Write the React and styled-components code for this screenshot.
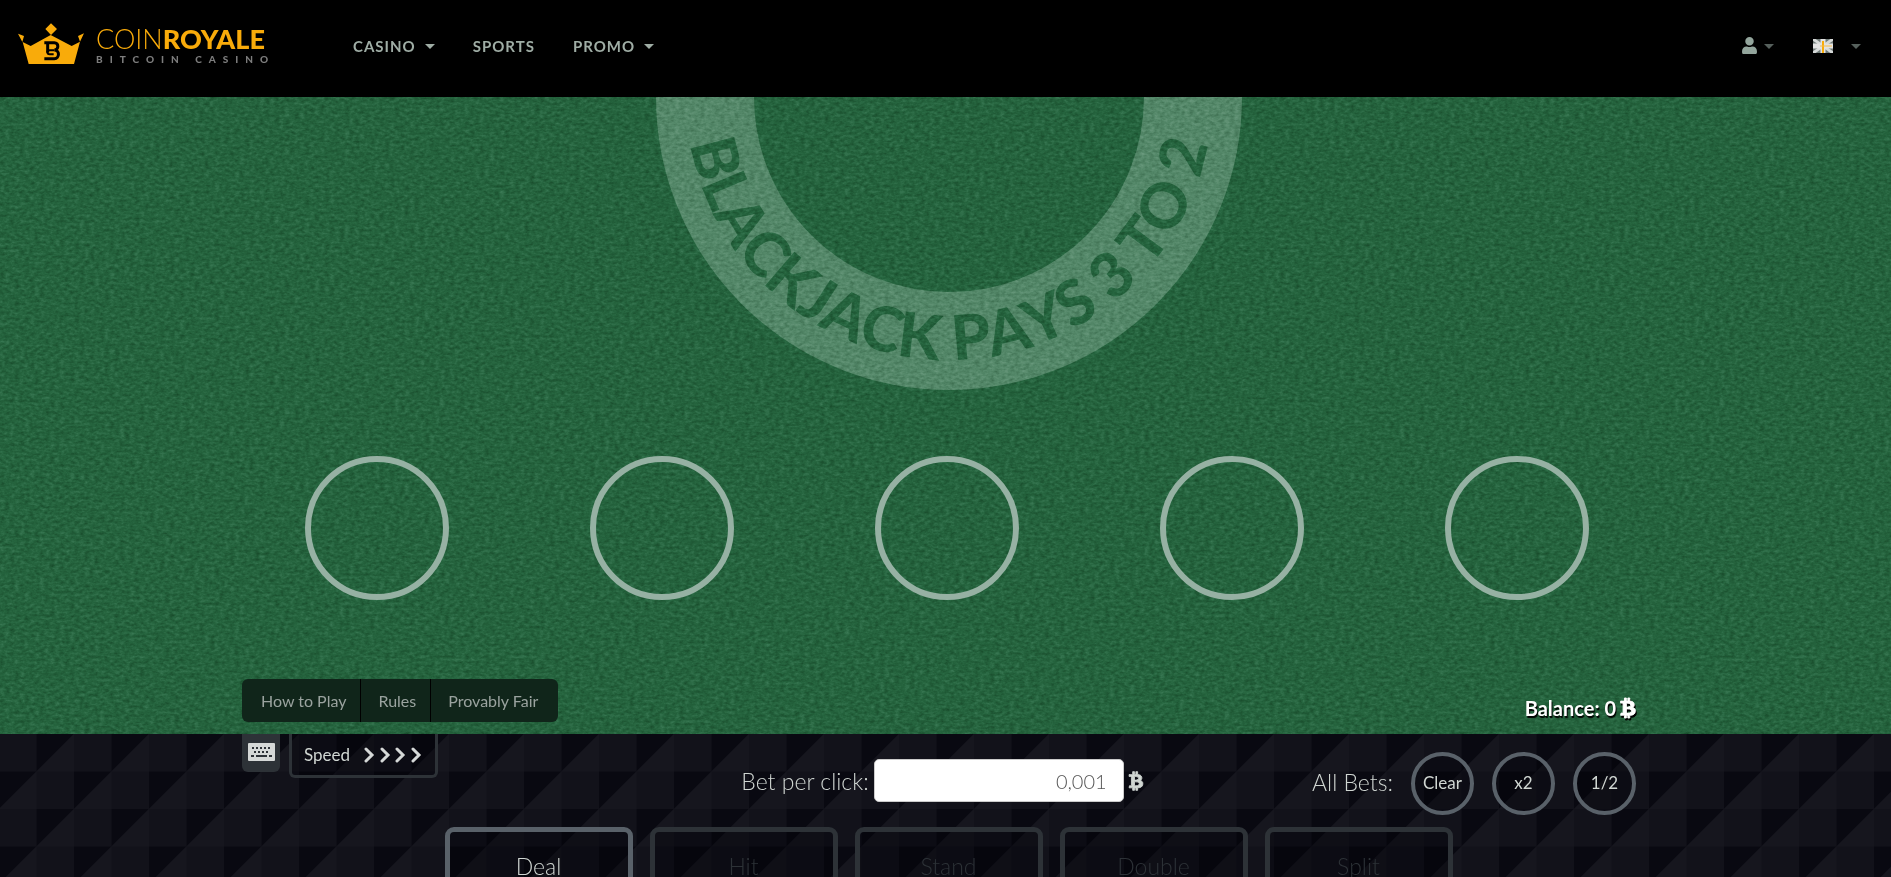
import { useState } from 'react'
import styled, { createGlobalStyle, css } from 'styled-components'
import { FaUser, FaBtc } from 'react-icons/fa'

const GlobalStyle = createGlobalStyle`
  *, *::before, *::after {
    box-sizing: border-box;
  }
  body {
    margin: 0;
    background: #0a0a12;
    color: #d0d6d2;
    font-family: Lato, 'Liberation Sans', sans-serif;
    font-size: 16px;
  }
  button, input {
    font-family: inherit;
    color: inherit;
  }
  a {
    color: inherit;
    text-decoration: none;
  }
`

const Page = styled.div`
  display: flex;
  flex-direction: column;
  height: 100vh;
  overflow: hidden;
`

/* header */

const Header = styled.header`
  display: flex;
  flex: none;
  align-items: center;
  height: 97px;
  padding: 0 30px 6px 18px;
  background: #000;
`

const LogoLink = styled.a`
  display: flex;
  align-items: center;
  gap: 12px;
  width: 335px;
  padding-bottom: 4px;
`

const LogoText = styled.span`
  display: flex;
  flex-direction: column;
  padding-top: 6px;
  color: #f9ab0a;
  font-size: 27px;
  font-weight: 300;
  line-height: 24px;

  b {
    font-weight: 900;
  }
  small {
    color: #7d7d7d;
    font-size: 10px;
    font-weight: 900;
    line-height: 16px;
    letter-spacing: 7px;
  }
`

const Nav = styled.nav`
  display: flex;
  flex: 1;
  gap: 38px;
`

const NavItem = styled.a`
  display: flex;
  align-items: center;
  gap: 9px;
  color: #9fada5;
  font-size: 15px;
  font-weight: 700;
  line-height: 20px;
  letter-spacing: 1px;
`

const Caret = styled.span`
  margin-top: 2px;
  border: 5px solid transparent;
  border-top-color: ${({ $dim }) => ($dim ? '#56605c' : '#9fada5')};
  border-bottom: 0;
`

const HeaderTools = styled.div`
  display: flex;
  gap: 39px;
`

const ToolButton = styled.button`
  display: flex;
  align-items: center;
  gap: ${({ $gap }) => $gap}px;
  padding: 0;
  border: 0;
  background: none;
  color: #93a59c;
`

/* table */

const Felt = styled.main`
  position: relative;
  display: flex;
  flex: none;
  flex-direction: column;
  justify-content: flex-end;
  height: 637px;
  overflow: hidden;
  background: #25643e;
`

const Ring = styled.svg`
  position: absolute;
  top: 0;
  left: 50%;
  width: 592px;
  height: 300px;
  margin-left: -293px;
`

const RingText = styled.text`
  fill: #25643e;
  font-size: 62px;
  font-weight: 900;
  font-kerning: none;
  text-anchor: middle;
`

const Texture = styled.svg`
  position: absolute;
  inset: 0;
  width: 100%;
  height: 100%;
  mix-blend-mode: ${({ $blend }) => $blend || 'normal'};
  pointer-events: none;
`

const Seats = styled.div`
  position: relative;
  display: flex;
  justify-content: center;
  gap: 141px;
  padding-left: 3px;
  margin-bottom: 79px;
`

const Seat = styled.button`
  width: 144px;
  height: 144px;
  border: 6px solid #96b1a3;
  border-radius: 50%;
  background: none;
`

const Container = styled.div`
  position: relative;
  display: flex;
  justify-content: space-between;
  width: calc(100% - 497px);
  margin-left: 242px;
`

const TableFooter = styled(Container)`
  align-items: flex-end;
  padding-bottom: 12px;
`

const InfoBar = styled.div`
  display: flex;
  height: 43px;
  border-radius: 6px;
  background: #10251a;
  color: #9aa39f;
`

const InfoLink = styled.a`
  padding: 0 14px 0 17px;
  line-height: 44px;

  & + & {
    border-left: 1px solid #000;
  }
  &:first-child {
    padding-left: 19px;
  }
  &:last-child {
    padding-right: 20px;
  }
`

const BitcoinSign = styled(FaBtc)`
  width: ${({ $width }) => $width}px;
  height: 20px;
  overflow: visible;
  stroke: currentColor;
  stroke-width: 24px;
`

const Balance = styled.div`
  display: flex;
  align-items: center;
  gap: 4px;
  color: #fff;
  font-size: 20px;
  font-weight: 700;
  line-height: 28px;
  text-shadow: 1px 2px 1px #000;

  svg {
    filter: drop-shadow(1px 2px 0 #000);
  }
`

/* controls */

const Controls = styled.section`
  position: relative;
  flex: 1 0 auto;
`

const ControlsRow = styled(Container)`
  display: grid;
  grid-template-columns: 1fr auto 1fr;
  align-items: start;
  height: 93px;
`

const Options = styled.div`
  display: flex;
  gap: 9px;
`

const KeyboardButton = styled.button`
  width: 38px;
  height: 38px;
  padding: 0;
  border: 0;
  border-radius: 0 0 6px 6px;
  background: #2d3237;
`

const SpeedButton = styled.button`
  display: flex;
  align-items: center;
  gap: 14px;
  height: 44px;
  padding: 0 13px 0 12px;
  border: 3px solid #2d3237;
  border-top: 0;
  border-radius: 0 0 6px 6px;
  background: rgba(0, 0, 6, 0.3);
  font-size: 17px;
`

const BetField = styled.div`
  display: flex;
  align-items: center;
  gap: 5px;
  padding-left: 6px;
  margin-top: 25px;
  font-size: 23px;
  font-weight: 300;
`

const BetInput = styled.input`
  width: 250px;
  height: 43px;
  padding: 0 16px;
  border: 1px solid #ccc;
  border-radius: 5px;
  background: #fff;
  color: #555;
  font-size: 20px;
  font-weight: 300;
  text-align: right;
`

const AllBets = styled.div`
  display: flex;
  align-items: center;
  justify-self: end;
  gap: 18px;
  margin-top: 18px;
  font-size: 23px;
  font-weight: 300;

  span {
    padding-bottom: 4px;
  }
`

const RoundButton = styled.button`
  width: 63px;
  height: 63px;
  padding: 0 0 2px;
  border: 4px solid #596169;
  border-radius: 50%;
  background: rgba(0, 0, 6, 0.3);
  font-size: 17px;
`

const Actions = styled.div`
  position: relative;
  display: flex;
  justify-content: center;
  gap: 17px;
  padding-left: 6px;
`

const ActionButton = styled.button`
  width: 188px;
  height: 78px;
  border: 5px solid #596169;
  border-radius: 9px;
  background: rgba(0, 0, 6, 0.3);
  font-size: 23px;
  font-weight: 300;

  ${({ disabled }) =>
    disabled &&
    css`
      border-color: #2d3237;
      color: #2d3237;
    `}
`

function Crown() {
  return (
    <svg width="66" height="42" viewBox="54 69 198 126" aria-hidden="true">
      <g fill="#f9ab0a">
        <path d="M86 192 68 126l24 12 60-33 63 33 25-13-18 67z" />
        <path d="m54 101 18 7-5 18zM252 100l-18 8 6 17zM153 70l18 17-18 18-17-18z" />
      </g>
      <g fill="none" stroke="#000">
        <path d="M133 128h30c14 0 14 22 0 22 17 0 16 26 0 26h-30" strokeWidth="9" />
        <path d="M143 128v30" strokeWidth="9" />
        <path d="M163 151h-14c-9 0-9 12 0 12h12" strokeWidth="6" />
      </g>
    </svg>
  )
}

function Flag() {
  return (
    <svg width="20" height="14" viewBox="0 0 20 14" aria-hidden="true">
      <rect width="20" height="14" fill="#6f7a77" />
      <path d="m0 0 20 14M20 0 0 14" stroke="#d6d9d8" strokeWidth="3" />
      <path d="M10 0v14M0 7h20" stroke="#e2e2e2" strokeWidth="5" />
      <path d="M10 2v12" stroke="#f9ab0a" strokeWidth="2" />
      <path d="M7 7h12" stroke="#f4bb4a" />
    </svg>
  )
}

function Keyboard() {
  return (
    <svg width="27" height="18" viewBox="0 0 27 18" aria-hidden="true">
      <rect width="27" height="18" rx="1" fill="#d5d8d7" />
      <path
        d="M4 5h20M6 9h16"
        stroke="#2d3237"
        strokeWidth="2"
        strokeDasharray="2 2"
      />
      <path d="M3 13h3M8 13h11M21 13h3" stroke="#2d3237" strokeWidth="2" />
    </svg>
  )
}

function SpeedArrows() {
  return (
    <svg width="58" height="16" viewBox="0 0 58 16" aria-hidden="true">
      {[0, 16, 31, 47].map((x) => (
        <path
          key={x}
          d={`M${x + 2} 2l6 6-6 6`}
          fill="none"
          stroke="#d5d8d7"
          strokeWidth="3"
          strokeLinecap="round"
        />
      ))}
    </svg>
  )
}

function PayoutRing() {
  return (
    <Ring viewBox="0 0 592 300">
      <circle cx="296" cy="0" r="244" fill="none" stroke="#548869" strokeWidth="98" />
      <path id="payout-arc" d="M33 0a263 263 0 0 0 526 0" fill="none" />
      <RingText>
        <textPath href="#payout-arc" startOffset="50%">
          BLACKJACK PAYS 3 TO 2
        </textPath>
      </RingText>
    </Ring>
  )
}

function FeltTexture() {
  return (
    <Texture $blend="soft-light" aria-hidden="true">
      <filter id="grain" x="0" y="0" width="100%" height="100%" colorInterpolationFilters="sRGB">
        <feTurbulence type="fractalNoise" baseFrequency="0.2 0.34" numOctaves="3" seed="4" />
        <feColorMatrix values="0 0 0 0.44 0.27  0 0 0 0.44 0.27  0 0 0 0.44 0.27  0 0 0 0 1" />
      </filter>
      <rect width="100%" height="100%" filter="url(#grain)" />
    </Texture>
  )
}

function TrianglePattern() {
  return (
    <Texture aria-hidden="true">
      <pattern id="triangles" x="-1" width="75" height="75" patternUnits="userSpaceOnUse">
        <rect width="75" height="75" fill="#12121a" />
        <path d="M37.5 0H75L37.5 37.5zM0 37.5h37.5L0 75z" fill="#090911" />
        <path d="M75 0v37.5H37.5zM37.5 37.5V75H0z" fill="#16161e" />
      </pattern>
      <rect width="100%" height="100%" fill="url(#triangles)" />
    </Texture>
  )
}

const SEATS = [1, 2, 3, 4, 5]
const ACTIONS = ['Deal', 'Hit', 'Stand', 'Double', 'Split']

function App() {
  const [bet, setBet] = useState('0,001')

  return (
    <Page>
      <GlobalStyle />
      <Header>
        <LogoLink href="#">
          <Crown />
          <LogoText>
            <span>
              COIN<b>ROYALE</b>
            </span>
            <small>BITCOIN CASINO</small>
          </LogoText>
        </LogoLink>
        <Nav>
          <NavItem href="#">
            CASINO <Caret />
          </NavItem>
          <NavItem href="#">SPORTS</NavItem>
          <NavItem href="#">
            PROMO <Caret />
          </NavItem>
        </Nav>
        <HeaderTools>
          <ToolButton $gap={6} aria-label="Account">
            <FaUser size={17} />
            <Caret $dim />
          </ToolButton>
          <ToolButton $gap={18} aria-label="Language">
            <Flag />
            <Caret $dim />
          </ToolButton>
        </HeaderTools>
      </Header>

      <Felt>
        <PayoutRing />
        <FeltTexture />
        <Seats>
          {SEATS.map((seat) => (
            <Seat key={seat} aria-label={`Seat ${seat}`} />
          ))}
        </Seats>
        <TableFooter>
          <InfoBar>
            <InfoLink href="#">How to Play</InfoLink>
            <InfoLink href="#">Rules</InfoLink>
            <InfoLink href="#">Provably Fair</InfoLink>
          </InfoBar>
          <Balance>
            Balance: 0 <BitcoinSign $width={16} />
          </Balance>
        </TableFooter>
      </Felt>

      <Controls>
        <TrianglePattern />
        <ControlsRow>
          <Options>
            <KeyboardButton aria-label="Keyboard shortcuts">
              <Keyboard />
            </KeyboardButton>
            <SpeedButton>
              Speed <SpeedArrows />
            </SpeedButton>
          </Options>
          <BetField>
            <label htmlFor="bet">Bet per click:</label>
            <BetInput id="bet" value={bet} onChange={(e) => setBet(e.target.value)} />
            <BitcoinSign $width={14} />
          </BetField>
          <AllBets>
            <span>All Bets:</span>
            <RoundButton>Clear</RoundButton>
            <RoundButton>x2</RoundButton>
            <RoundButton>1/2</RoundButton>
          </AllBets>
        </ControlsRow>
        <Actions>
          {ACTIONS.map((action) => (
            <ActionButton key={action} disabled={action !== 'Deal'}>
              {action}
            </ActionButton>
          ))}
        </Actions>
      </Controls>
    </Page>
  )
}

export default App
